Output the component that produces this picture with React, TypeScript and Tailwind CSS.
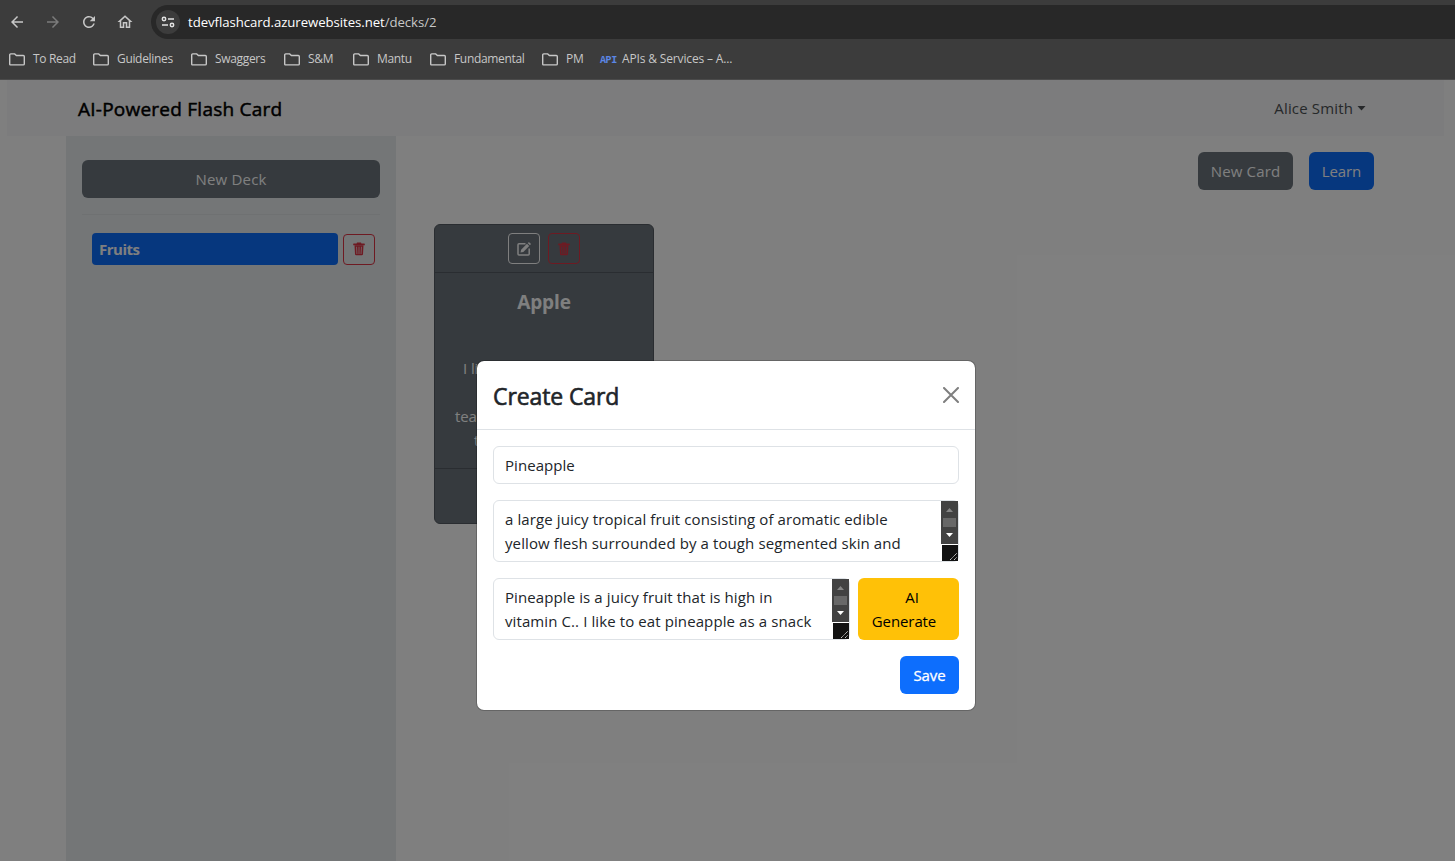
import React from "react";
import { MdArrowBack, MdArrowForward, MdRefresh, MdOutlineHome } from "react-icons/md";

function TrashIcon() {
  return (
    <svg width="12" height="14" viewBox="0 0 12 14" fill="none" className="shrink-0">
      <path fill="currentColor" d="M4 0.600h4l.4 1H11.300q.5 0 .5.500V3.200H.2V2.100q0-.5.500-.5H3.600z" />
      <path fill="currentColor" fillRule="evenodd" d="M1.500 3.200h9l-.5 9q-.1 1.100-1.200 1.100H3.200q-1.100 0-1.200-1.100zM3.300 4.700l.3 7.200h.7L4 4.700zM5.650 4.700v7.200h.7V4.700zM8 4.700l-.3 7.200h.7l.3-7.200z" />
    </svg>
  );
}

function EditIcon() {
  return (
    <svg width="14" height="14" viewBox="0 0 14 14" fill="none" className="shrink-0">
      <path stroke="currentColor" strokeWidth="1.5" d="M8.500 1.800H2q-1 0-1 1V12q0 1 1 1h9.200q1 0 1-1V6.500" />
      <path fill="currentColor" d="M10 1.800l2.200 2.200-5.900 5.900-2.800.6.600-2.800zM10.700 1.100l.7-.7q.5-.5 1 0l1.200 1.200q.5.5 0 1l-.7.700z" />
    </svg>
  );
}

function Folder() {
  return (
    <svg width="16" height="13" viewBox="0 0 16 13" fill="none" stroke="#c7c7c7" strokeWidth="1.4" className="shrink-0">
      <path d="M1.700.9h4l1.700 1.600h6.900q1 0 1 1v7.400q0 1-1 1H1.700q-1 0-1-1v-9q0-1 1-1z" />
    </svg>
  );
}

function Bookmark({ label, width }: { label: string; width: string }) {
  return (
    <div className={"flex shrink-0 items-center gap-2 " + width}>
      <Folder />
      <span className="whitespace-nowrap">{label}</span>
    </div>
  );
}

function BrowserBar() {
  return (
    <header className="flex h-20 shrink-0 flex-col border-b border-[#4a4a4a] bg-[#3c3c3c]">
      <div className="flex h-11 items-center">
        <div className="flex w-[151px] shrink-0 items-center gap-[18px] pl-2 text-lg text-[#c7c7c7]">
          <MdArrowBack />
          <MdArrowForward className="text-[#7b7b7b]" />
          <MdRefresh />
          <MdOutlineHome />
        </div>
        <div className="flex h-[34px] flex-1 items-center gap-2 rounded-l-full bg-[#282828] pl-[5px]">
          <div className="flex size-6 items-center justify-center rounded-full bg-[#3c3c3c]">
            <svg width="14" height="14" viewBox="0 0 14 14" fill="none" stroke="#e3e3e3" strokeWidth="1.5">
              <circle cx="3" cy="4" r="1.700" />
              <path d="M7 4h6M1 10h6" />
              <circle cx="11" cy="10" r="1.700" />
            </svg>
          </div>
          <div className="pt-px text-[13.2px] tracking-[-0.06px] text-[#c7c7c7]">
            <span className="text-white">tdevflashcard.azurewebsites.net</span>/decks/2
          </div>
        </div>
      </div>
      <nav className="flex h-[30px] items-center pl-[9px] text-[12px] tracking-[-0.33px] text-[#c7c7c7]">
        <Bookmark label="To Read" width="w-[84px]" />
        <Bookmark label="Guidelines" width="w-[98px]" />
        <Bookmark label="Swaggers" width="w-[93px]" />
        <Bookmark label="S&M" width="w-[69px]" />
        <Bookmark label="Mantu" width="w-[77px]" />
        <Bookmark label="Fundamental" width="w-[112px]" />
        <Bookmark label="PM" width="w-[58px]" />
        <span className="w-[22px] pt-0.5 font-['Liberation_Mono',monospace] text-[10px] font-bold tracking-[-0.4px] text-[#5b86e5]">API</span>
        <span className="tracking-[-0.15px] whitespace-nowrap">APIs &amp; Services – A...</span>
      </nav>
    </header>
  );
}

function FlashCard() {
  return (
    <article className="mt-[34px] ml-[38px] flex h-[300px] w-[220px] flex-col rounded-md border border-[#555b62] bg-[#6c757d] text-center text-white">
      <div className="flex h-12 shrink-0 items-center justify-center gap-2 border-b border-[#555b62]">
        <button className="flex h-[31px] w-8 items-center justify-center rounded border border-white"><EditIcon /></button>
        <button className="flex h-[31px] w-8 items-center justify-center rounded border border-[#dc3545] text-[#dc3545]"><TrashIcon /></button>
      </div>
      <div className="flex-1 px-4 pt-4">
        <h5 className="text-[19px] leading-[26px] font-bold">Apple</h5>
        <p className="mt-[41px] pl-3 text-left leading-6">I like</p>
        <p className="mt-6 pl-1 text-left leading-6">teacher</p>
        <p className="pl-[23px] text-left leading-6">the</p>
      </div>
      <div className="h-[55px] shrink-0 border-t border-[#555b62]" />
    </article>
  );
}

function DeckPage() {
  return (
    <>
      <div className="mr-[11px] ml-[7px] flex h-14 items-center justify-between bg-[#f8f9fa] pr-[78px] pl-[71px]">
        <h1 className="pt-0.5 text-[19px] tracking-[0.24px] text-black [-webkit-text-stroke:0.5px]">AI-Powered Flash Card</h1>
        <div className="flex items-center gap-1 text-[#4d5154]">
          <span className="tracking-[0.15px]">Alice Smith</span>
          <svg width="9" height="5" viewBox="0 0 9 5" fill="currentColor"><path d="M.5 0h8l-4 4.500z" /></svg>
        </div>
      </div>
      <div className="flex flex-1 pl-[66px]">
        <aside className="w-[330px] shrink-0 bg-[#e9ecef] px-4 pt-6">
          <button className="h-[38px] w-[298px] rounded-md bg-[#6c757d] tracking-[0.2px] text-white">New Deck</button>
          <hr className="mt-4 border-[#dfe2e5]" />
          <div className="mt-[18px] flex items-center gap-[5px] pl-[10px]">
            <div className="flex h-8 w-[246px] items-center rounded bg-[#0d6efd] pl-[7px] font-bold tracking-[-0.5px] text-white">Fruits</div>
            <button className="mt-px flex h-[31px] w-8 items-center justify-center rounded border border-[#dc3545] pr-px pb-0.5 text-[#dc3545]"><TrashIcon /></button>
          </div>
        </aside>
        <main className="flex-1">
          <div className="flex justify-end gap-4 pt-4 pr-[81px]">
            <button className="h-[38px] w-[95px] rounded-md bg-[#6c757d] tracking-[0.15px] text-white">New Card</button>
            <button className="h-[38px] w-[65px] rounded-md bg-[#0d6efd] text-white">Learn</button>
          </div>
          <FlashCard />
        </main>
      </div>
    </>
  );
}

function ScrollRail() {
  return (
    <div className="flex h-[60px] w-[17px] shrink-0 flex-col">
      <svg width="17" height="60" viewBox="0 0 17 60">
        <path fill="#424242" d="M0 0h17v43H0z" />
        <path fill="#858585" d="M5 11h7L8.500 7z" />
        <path fill="#686868" d="M2 17h13v9H2z" />
        <path fill="#fff" d="M5 32h7l-3.500 4z" />
        <path fill="#121212" d="M1 44h16v16H1z" />
        <path stroke="#c8c8c8" strokeWidth="1" strokeDasharray="1.400 .4" d="M9 59l7-7M13 59l3-3" />
      </svg>
    </div>
  );
}

function TextBox({ lines, width }: { lines: string[]; width: string }) {
  return (
    <div className={"flex h-[62px] justify-between rounded-md border border-[#dee2e6] " + width}>
      <div className="pt-[6px] pl-[11px] leading-6 tracking-[0.1px] whitespace-nowrap">
        {lines.map((line) => <p key={line}>{line}</p>)}
      </div>
      <ScrollRail />
    </div>
  );
}

function CreateCardDialog() {
  return (
    <section className="absolute top-[360px] left-[476px] flex h-[351px] w-[500px] flex-col rounded-lg border border-black/20 bg-white bg-clip-padding text-[#212529]">
      <div className="flex h-[69px] shrink-0 items-center justify-between border-b border-[#dee2e6] px-4">
        <h2 className="pt-0.5 text-[23px] tracking-[-0.1px] [-webkit-text-stroke:0.6px]">Create Card</h2>
        <svg width="16" height="16" viewBox="0 0 16 16" stroke="#7f7f7f" strokeWidth="2" strokeLinecap="round"><path d="M1 1l14 14M15 1L1 15" /></svg>
      </div>
      <div className="flex flex-col gap-4 px-4 pt-4">
        <div className="flex h-[38px] items-center rounded-md border border-[#dee2e6] pl-[11px] tracking-[0.05px]">Pineapple</div>
        <TextBox width="w-[466px]" lines={["a large juicy tropical fruit consisting of aromatic edible", "yellow flesh surrounded by a tough segmented skin and"]} />
        <div className="flex justify-between">
          <TextBox width="w-[357px]" lines={["Pineapple is a juicy fruit that is high in", "vitamin C.. I like to eat pineapple as a snack"]} />
          <button className="h-[62px] w-[101px] rounded-md bg-[#ffc107] text-black">
            <span className="block pl-[7px] leading-6">AI</span>
            <span className="block pr-[9px] leading-6">Generate</span>
          </button>
        </div>
        <button className="h-[38px] w-[59px] self-end rounded-md bg-[#0d6efd] text-white [-webkit-text-stroke:0.3px]">Save</button>
      </div>
    </section>
  );
}

export default function App() {
  return (
    <div className="relative flex h-[861px] w-[1455px] flex-col overflow-hidden bg-white font-['Open_Sans',sans-serif] text-[15px] tracking-[-0.1px]">
      <BrowserBar />
      <DeckPage />
      <div className="absolute inset-x-0 top-20 bottom-0 bg-black/50" />
      <CreateCardDialog />
    </div>
  );
}
